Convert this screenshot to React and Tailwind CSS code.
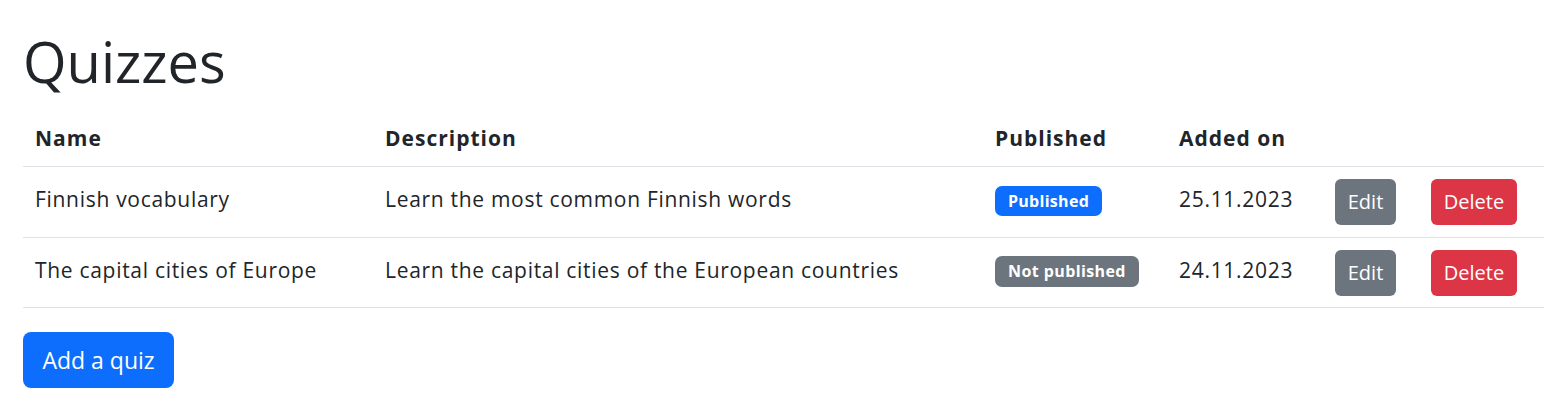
import React from 'react';

const quizzes = [
  {
    id: 1,
    name: 'Finnish vocabulary',
    description: 'Learn the most common Finnish words',
    published: true,
    addedOn: '25.11.2023'
  },
  {
    id: 2,
    name: 'The capital cities of Europe',
    description: 'Learn the capital cities of the European countries',
    published: false,
    addedOn: '24.11.2023'
  }
];

const App = () => {
  return (
    <div className="min-h-screen bg-white pl-[23px] pr-4 pt-[28px] font-['Open_Sans',sans-serif] text-[#212529]">
      {/* Title */}
      <h1 className="text-[56px] leading-[67px] font-normal mb-[21px]">Quizzes</h1>

      {/* Quiz table */}
      <table className="w-full table-fixed border-separate border-spacing-0 text-[21px] tracking-[0.7px]">
        <colgroup>
          <col className="w-[350px]" />
          <col className="w-[612px]" />
          <col className="w-[182px]" />
          <col className="w-[158px]" />
          <col className="w-[96px]" />
          <col />
        </colgroup>
        <thead>
          <tr>
            <th className="text-left font-bold tracking-[1px] leading-[30px] pl-[12px] pt-[7px] pb-[13px] border-b border-[#dee2e6]">Name</th>
            <th className="text-left font-bold tracking-[1px] leading-[30px] pl-[12px] pt-[7px] pb-[13px] border-b border-[#dee2e6]">Description</th>
            <th className="text-left font-bold tracking-[1px] leading-[30px] pl-[10px] pt-[7px] pb-[13px] border-b border-[#dee2e6]">Published</th>
            <th className="text-left font-bold tracking-[1px] leading-[30px] pl-[12px] pt-[7px] pb-[13px] border-b border-[#dee2e6]">Added on</th>
            <th className="border-b border-[#dee2e6]"></th>
            <th className="border-b border-[#dee2e6]"></th>
          </tr>
        </thead>
        <tbody>
          {quizzes.map((quiz, i) => (
            <tr key={quiz.id}>
              <td className={`${i === 0 ? 'h-[71px]' : 'h-[70px]'} align-middle pl-[12px] pb-[6px] leading-[30px] border-b border-[#dee2e6]`}>
                {quiz.name}
              </td>
              <td className="align-middle pl-[12px] pb-[6px] leading-[30px] border-b border-[#dee2e6]">
                {quiz.description}
              </td>
              <td className="align-middle pl-[10px] pb-[4px] border-b border-[#dee2e6]">
                {quiz.published ? (
                  <span className="inline-flex items-center justify-center w-[107px] h-[30px] rounded-[7px] bg-[#0d6efd] text-white text-[16px] tracking-[0.3px] font-bold">
                    Published
                  </span>
                ) : (
                  <span className="inline-flex items-center justify-center w-[144px] h-[31px] rounded-[7px] bg-[#6c757d] text-white text-[16px] tracking-[0.4px] font-bold">
                    Not published
                  </span>
                )}
              </td>
              <td className="align-middle pl-[12px] pb-[6px] leading-[30px] border-b border-[#dee2e6]">
                {quiz.addedOn}
              </td>
              <td className="align-middle pl-[10px] border-b border-[#dee2e6]">
                <button className="flex items-center justify-center w-[61px] h-[46px] rounded-[6px] bg-[#6c757d] text-white text-[20px] tracking-normal">
                  Edit
                </button>
              </td>
              <td className="align-middle pl-[10px] border-b border-[#dee2e6]">
                <button className="flex items-center justify-center w-[86px] h-[46px] rounded-[6px] bg-[#dc3545] text-white text-[20px] tracking-normal">
                  Delete
                </button>
              </td>
            </tr>
          ))}
        </tbody>
      </table>

      {/* Add button */}
      <button className="mt-[24px] flex items-center justify-center w-[151px] h-[56px] rounded-[8px] bg-[#0d6efd] text-white text-[23px]">
        Add a quiz
      </button>
    </div>
  );
};

export default App;
